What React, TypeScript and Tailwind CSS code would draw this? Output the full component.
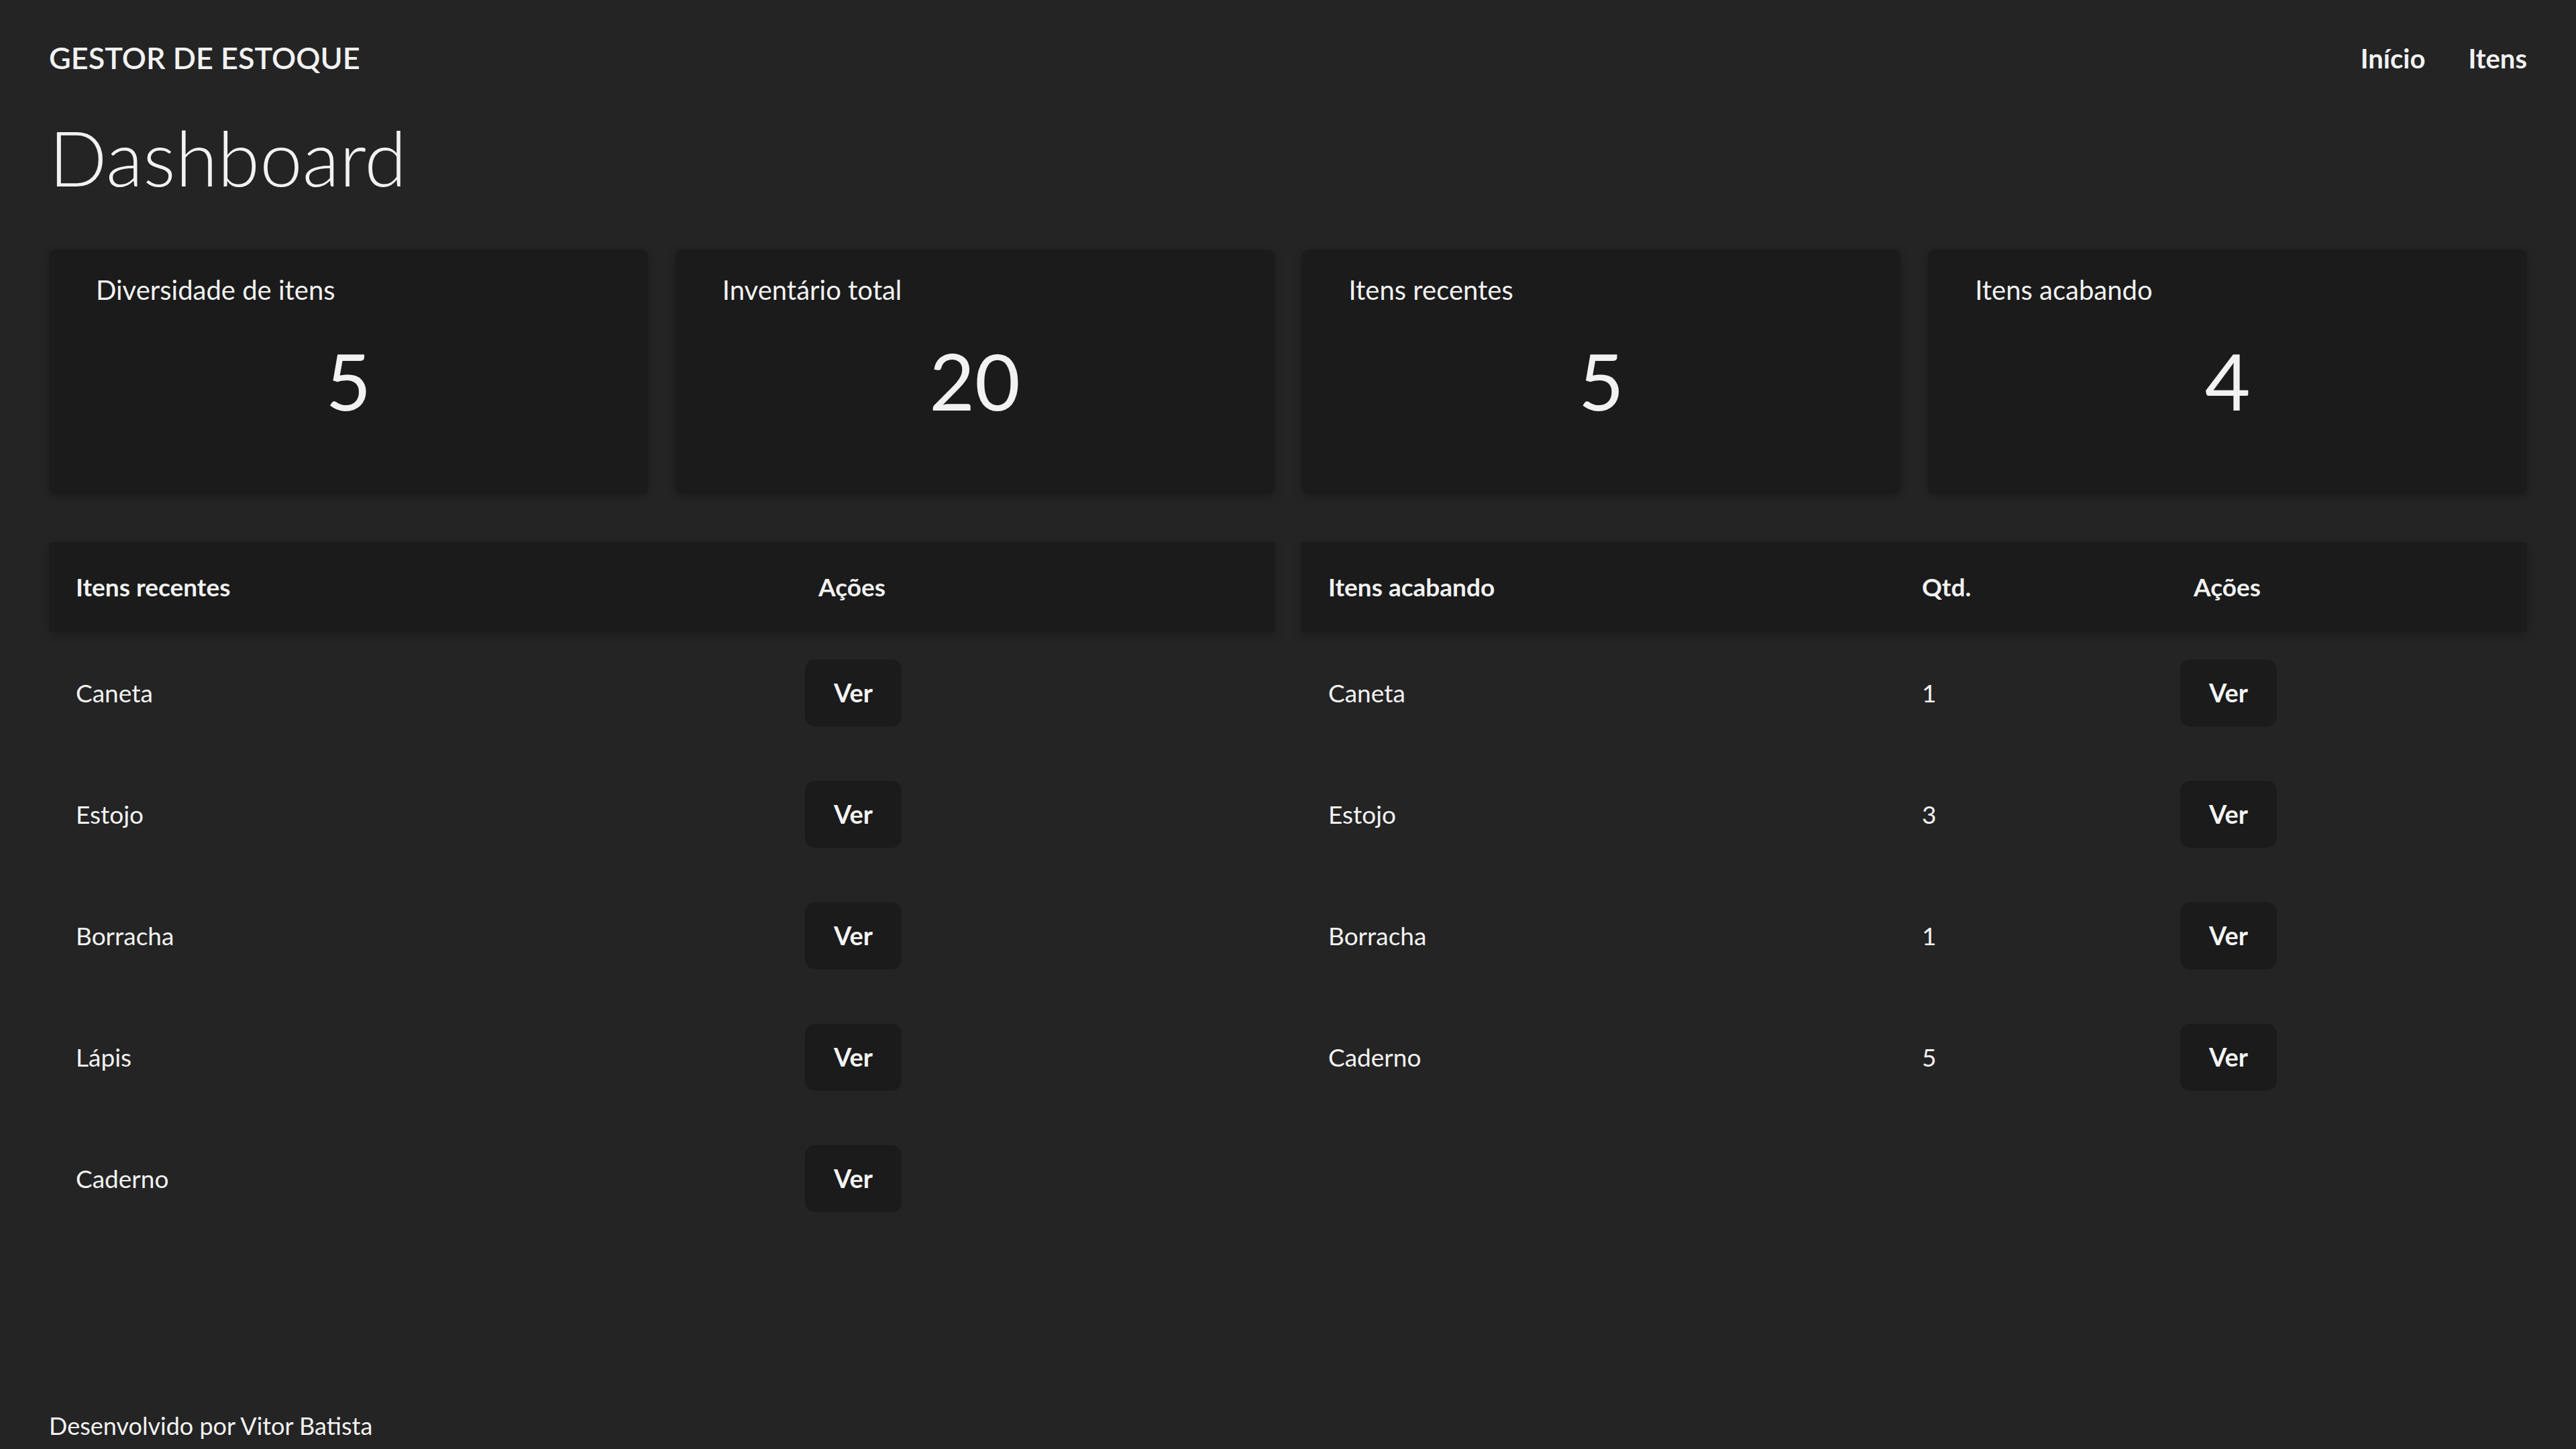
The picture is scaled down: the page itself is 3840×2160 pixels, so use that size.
import React from 'react'

const stats = [
  { label: 'Diversidade de itens', value: 5 },
  { label: 'Inventário total', value: 20 },
  { label: 'Itens recentes', value: 5 },
  { label: 'Itens acabando', value: 4 },
]

const recentes = ['Caneta', 'Estojo', 'Borracha', 'Lápis', 'Caderno']

const acabando = [
  { name: 'Caneta', qtd: 1 },
  { name: 'Estojo', qtd: 3 },
  { name: 'Borracha', qtd: 1 },
  { name: 'Caderno', qtd: 5 },
]

function VerButton() {
  return (
    <button className="w-[144px] h-[100px] rounded-[15px] bg-[#1b1b1b] text-[#f4f4f4] text-[38px] font-bold">
      Ver
    </button>
  )
}

export default function App() {
  return (
    <div
      className="min-h-screen flex flex-col bg-[#242424] text-[#f2f2f2] px-[73px]"
      style={{ fontFamily: 'Lato, "Open Sans", sans-serif' }}
    >
      <header className="flex items-center justify-between h-[104px] mt-[35px]">
        <a className="text-[45px] font-semibold">GESTOR DE ESTOQUE</a>
        <nav className="flex items-center gap-[64px] text-[40px] font-bold">
          <a>Início</a>
          <a>Itens</a>
        </nav>
      </header>

      <h1 className="mt-[38px] text-[114px] leading-none font-light">Dashboard</h1>

      <div className="mt-[81px] grid grid-cols-4 gap-[41px]">
        {stats.map((s) => (
          <div
            key={s.label}
            className="h-[364px] rounded-[10px] bg-[#1b1b1b] shadow-[0_4px_14px_rgba(0,0,0,0.25)] pt-[30px] px-[70px]"
          >
            <p className="text-[40px] leading-[1.5]">{s.label}</p>
            <p className="mt-[47px] text-[117px] leading-none text-center">{s.value}</p>
          </div>
        ))}
      </div>

      <div className="mt-[72px] grid grid-cols-2 gap-[40px] items-start">
        <div>
          <div className="grid grid-cols-[1107px_1fr] h-[134px] items-center bg-[#1b1b1b] shadow-[0_4px_14px_rgba(0,0,0,0.25)] text-[37px] font-bold">
            <div className="pl-[40px]">Itens recentes</div>
            <div className="pl-[40px]">Ações</div>
          </div>
          {recentes.map((r) => (
            <div key={r} className="grid grid-cols-[1107px_1fr] h-[181px] items-center text-[37px]">
              <div className="pl-[40px]">{r}</div>
              <div className="pl-[20px]">
                <VerButton />
              </div>
            </div>
          ))}
        </div>

        <div>
          <div className="grid grid-cols-[885px_405px_1fr] h-[134px] items-center bg-[#1b1b1b] shadow-[0_4px_14px_rgba(0,0,0,0.25)] text-[37px] font-bold">
            <div className="pl-[40px]">Itens acabando</div>
            <div className="pl-[40px]">Qtd.</div>
            <div className="pl-[40px]">Ações</div>
          </div>
          {acabando.map((r) => (
            <div key={r.name} className="grid grid-cols-[885px_405px_1fr] h-[181px] items-center text-[37px]">
              <div className="pl-[40px]">{r.name}</div>
              <div className="pl-[40px]">{r.qtd}</div>
              <div className="pl-[20px]">
                <VerButton />
              </div>
            </div>
          ))}
        </div>
      </div>

      <footer className="mt-auto pb-[8px] text-[36px] leading-[1.5]">Desenvolvido por Vitor Batista</footer>
    </div>
  )
}
